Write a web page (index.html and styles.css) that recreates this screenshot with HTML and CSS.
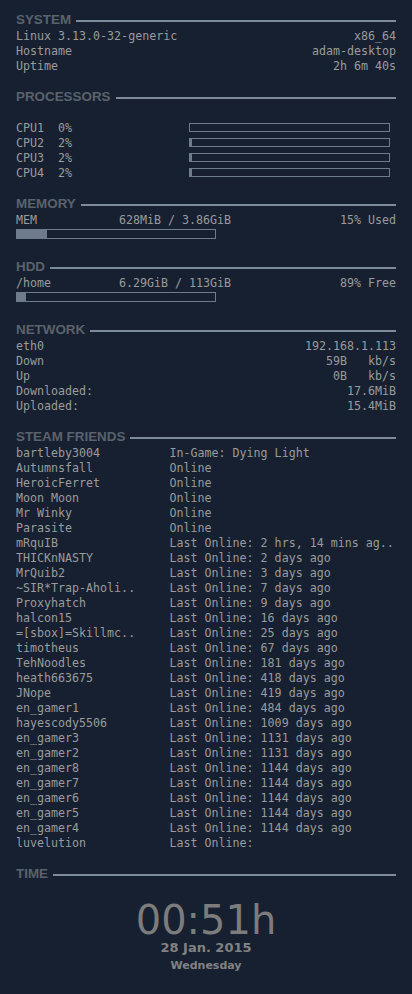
FILE: index.html
```html
<!DOCTYPE html>
<html>
<head>
<meta charset="utf-8">
<link rel="stylesheet" href="styles.css">
</head>
<body>
<section class="sec">
  <div class="hd"><span class="ht">SYSTEM</span><span class="hl"></span></div>
  <div class="row"><span>Linux 3.13.0-32-generic</span><span>x86_64</span></div>
  <div class="row"><span>Hostname</span><span>adam-desktop</span></div>
  <div class="row"><span>Uptime</span><span>2h 6m 40s</span></div>
</section>
<section class="sec">
  <div class="hd"><span class="ht">PROCESSORS</span><span class="hl"></span></div>
  <div class="cpus">
    <div class="row"><span class="pre">CPU1  0%</span><div class="bar cpubar"><div class="fill" style="width:0px"></div></div></div>
    <div class="row"><span class="pre">CPU2  2%</span><div class="bar cpubar"><div class="fill" style="width:2px"></div></div></div>
    <div class="row"><span class="pre">CPU3  2%</span><div class="bar cpubar"><div class="fill" style="width:2px"></div></div></div>
    <div class="row"><span class="pre">CPU4  2%</span><div class="bar cpubar"><div class="fill" style="width:2px"></div></div></div>
  </div>
</section>
<section class="sec">
  <div class="hd"><span class="ht">MEMORY</span><span class="hl"></span></div>
  <div class="row"><span class="lbl">MEM</span><span class="mid">628MiB / 3.86GiB</span><span>15% Used</span></div>
  <div class="barrow"><div class="bar membar"><div class="fill" style="width:30px"></div></div></div>
</section>
<section class="sec">
  <div class="hd"><span class="ht">HDD</span><span class="hl"></span></div>
  <div class="row"><span class="lbl">/home</span><span class="mid">6.29GiB / 113GiB</span><span>89% Free</span></div>
  <div class="barrow"><div class="bar membar"><div class="fill" style="width:9px"></div></div></div>
</section>
<section class="sec">
  <div class="hd"><span class="ht">NETWORK</span><span class="hl"></span></div>
  <div class="row"><span>eth0</span><span>192.168.1.113</span></div>
  <div class="row"><span>Down</span><span class="pre">59B   kb/s</span></div>
  <div class="row"><span>Up</span><span class="pre">0B   kb/s</span></div>
  <div class="row"><span>Downloaded:</span><span>17.6MiB</span></div>
  <div class="row"><span>Uploaded:</span><span>15.4MiB</span></div>
</section>
<section class="sec">
  <div class="hd"><span class="ht">STEAM FRIENDS</span><span class="hl"></span></div>
  <div class="friends">
    <span>bartleby3004</span><span>In-Game: Dying Light</span>
    <span>Autumnsfall</span><span>Online</span>
    <span>HeroicFerret</span><span>Online</span>
    <span>Moon Moon</span><span>Online</span>
    <span>Mr Winky</span><span>Online</span>
    <span>Parasite</span><span>Online</span>
    <span>mRquIB</span><span>Last Online: 2 hrs, 14 mins ag..</span>
    <span>THICKnNASTY</span><span>Last Online: 2 days ago</span>
    <span>MrQuib2</span><span>Last Online: 3 days ago</span>
    <span>~SIR*Trap-Aholi..</span><span>Last Online: 7 days ago</span>
    <span>Proxyhatch</span><span>Last Online: 9 days ago</span>
    <span>halcon15</span><span>Last Online: 16 days ago</span>
    <span>=[sbox]=Skillmc..</span><span>Last Online: 25 days ago</span>
    <span>timotheus</span><span>Last Online: 67 days ago</span>
    <span>TehNoodles</span><span>Last Online: 181 days ago</span>
    <span>heath663675</span><span>Last Online: 418 days ago</span>
    <span>JNope</span><span>Last Online: 419 days ago</span>
    <span>en_gamer1</span><span>Last Online: 484 days ago</span>
    <span>hayescody5506</span><span>Last Online: 1009 days ago</span>
    <span>en_gamer3</span><span>Last Online: 1131 days ago</span>
    <span>en_gamer2</span><span>Last Online: 1131 days ago</span>
    <span>en_gamer8</span><span>Last Online: 1144 days ago</span>
    <span>en_gamer7</span><span>Last Online: 1144 days ago</span>
    <span>en_gamer6</span><span>Last Online: 1144 days ago</span>
    <span>en_gamer5</span><span>Last Online: 1144 days ago</span>
    <span>en_gamer4</span><span>Last Online: 1144 days ago</span>
    <span>luvelution</span><span>Last Online:</span>
  </div>
</section>
<section class="sec">
  <div class="hd"><span class="ht">TIME</span><span class="hl"></span></div>
  <div class="clock">
    <div class="time">00:51h</div>
    <div class="date">28 Jan. 2015</div>
    <div class="day">Wednesday</div>
  </div>
</section>
</body>
</html>
```
FILE: styles.css
```css
html, body {
  margin: 0;
  padding: 0;
  background: #162030;
}
body {
  padding: 12px 16px 0 16px;
  font-family: "DejaVu Sans Mono", monospace;
  font-size: 11.65px;
  line-height: 15px;
  color: #9b9b9b;
  height: 994px;
  box-sizing: border-box;
  overflow: hidden;
}
.sec {
  margin-bottom: 15.5px;
}
.hd {
  display: flex;
  align-items: flex-start;
  gap: 5px;
  height: 16.5px;
}
.ht {
  font-family: "Liberation Sans", Arial, sans-serif;
  font-weight: bold;
  font-size: 13.4px;
  line-height: 16px;
  color: #5a626d;
}
.hl {
  flex: 1;
  height: 2px;
  margin-top: 7.5px;
  background: #7c8a9b;
}
.row {
  display: flex;
  justify-content: space-between;
  align-items: flex-start;
  height: 15px;
}
.pre {
  white-space: pre;
}
.cpus {
  margin-top: 15px;
}
.bar {
  box-sizing: border-box;
  border: 1px solid #6d7b8d;
  display: flex;
}
.fill {
  background: #6d7b8d;
  height: 100%;
}
.cpubar {
  width: 201px;
  height: 9px;
  margin-top: 2px;
  margin-right: 6px;
}
.barrow {
  height: 15px;
}
.membar {
  width: 200px;
  height: 10px;
  margin-top: 1px;
}
.lbl {
  width: 103px;
  white-space: pre;
}
.mid {
  flex: 1;
}
.friends {
  display: grid;
  grid-template-columns: 153.5px 1fr;
  grid-auto-rows: 15px;
  white-space: pre;
}
.clock {
  margin-top: 17.5px;
  display: flex;
  flex-direction: column;
  align-items: center;
  color: #7c7c7c;
  font-family: "DejaVu Sans", sans-serif;
}
.time {
  font-size: 40px;
  line-height: 40px;
}
.date {
  font-weight: bold;
  font-size: 13px;
  line-height: 16px;
  color: #828282;
}
.day {
  font-weight: bold;
  font-size: 11px;
  line-height: 16px;
  margin-top: 2px;
  color: #828282;
}
```
